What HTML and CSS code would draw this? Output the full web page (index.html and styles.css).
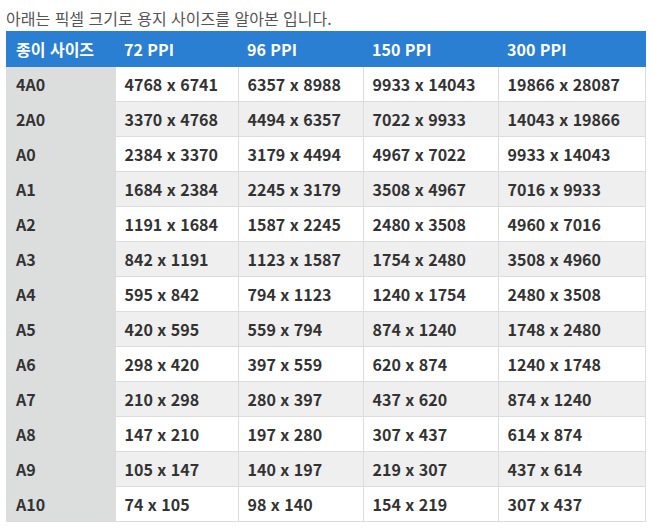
FILE: index.html
```html
<!DOCTYPE html>
<html lang="ko">
<head>
<meta charset="utf-8">
<link rel="stylesheet" href="styles.css">
</head>
<body>
<p class="intro">아래는 픽셀 크기로 용지 사이즈를 알아본 입니다.</p>
<table class="ppi-table">
  <thead>
    <tr><th>종이 사이즈</th><th>72 PPI</th><th>96 PPI</th><th>150 PPI</th><th>300 PPI</th></tr>
  </thead>
  <tbody>
    <tr><td>4A0</td><td>4768 x 6741</td><td>6357 x 8988</td><td>9933 x 14043</td><td>19866 x 28087</td></tr>
    <tr><td>2A0</td><td>3370 x 4768</td><td>4494 x 6357</td><td>7022 x 9933</td><td>14043 x 19866</td></tr>
    <tr><td>A0</td><td>2384 x 3370</td><td>3179 x 4494</td><td>4967 x 7022</td><td>9933 x 14043</td></tr>
    <tr><td>A1</td><td>1684 x 2384</td><td>2245 x 3179</td><td>3508 x 4967</td><td>7016 x 9933</td></tr>
    <tr><td>A2</td><td>1191 x 1684</td><td>1587 x 2245</td><td>2480 x 3508</td><td>4960 x 7016</td></tr>
    <tr><td>A3</td><td>842 x 1191</td><td>1123 x 1587</td><td>1754 x 2480</td><td>3508 x 4960</td></tr>
    <tr><td>A4</td><td>595 x 842</td><td>794 x 1123</td><td>1240 x 1754</td><td>2480 x 3508</td></tr>
    <tr><td>A5</td><td>420 x 595</td><td>559 x 794</td><td>874 x 1240</td><td>1748 x 2480</td></tr>
    <tr><td>A6</td><td>298 x 420</td><td>397 x 559</td><td>620 x 874</td><td>1240 x 1748</td></tr>
    <tr><td>A7</td><td>210 x 298</td><td>280 x 397</td><td>437 x 620</td><td>874 x 1240</td></tr>
    <tr><td>A8</td><td>147 x 210</td><td>197 x 280</td><td>307 x 437</td><td>614 x 874</td></tr>
    <tr><td>A9</td><td>105 x 147</td><td>140 x 197</td><td>219 x 307</td><td>437 x 614</td></tr>
    <tr><td>A10</td><td>74 x 105</td><td>98 x 140</td><td>154 x 219</td><td>307 x 437</td></tr>
  </tbody>
</table>
</body>
</html>
```

FILE: styles.css
```css
html, body {
  margin: 0;
  padding: 0;
  background: #fff;
}
body {
  padding: 0 10px 0 6px;
  font-family: "Noto Sans CJK KR", "Noto Sans", sans-serif;
}
.intro {
  margin: 0;
  height: 31px;
  line-height: 36px;
  font-size: 16px;
  color: #555;
}
.ppi-table {
  width: 640px;
  border-collapse: collapse;
  table-layout: fixed;
  font-size: 16px;
  font-weight: bold;
  color: #333;
}
.ppi-table th:nth-child(1) { width: 109px; }
.ppi-table th:nth-child(2) { width: 123px; }
.ppi-table th:nth-child(3) { width: 125px; }
.ppi-table th:nth-child(4) { width: 135px; }
.ppi-table th {
  background: #2a7fd3;
  color: #fff;
  text-align: left;
  height: 36px;
  padding: 0 9px;
  font-size: 16px;
  box-sizing: border-box;
}
.ppi-table th:first-child { padding-left: 10px; }
.ppi-table td {
  height: 35px;
  padding: 0 9px;
  border: 1px solid #dcdcdc;
  box-sizing: border-box;
  background: #fff;
}
.ppi-table tbody tr:nth-child(even) td { background: #efefef; }
.ppi-table td:first-child {
  background: #dcdddd !important;
  border-left: none;
  border-right: none;
  padding-left: 10px;
}
.ppi-table tbody tr:first-child td {
  border-top: none;
  height: 34px;
}
```
